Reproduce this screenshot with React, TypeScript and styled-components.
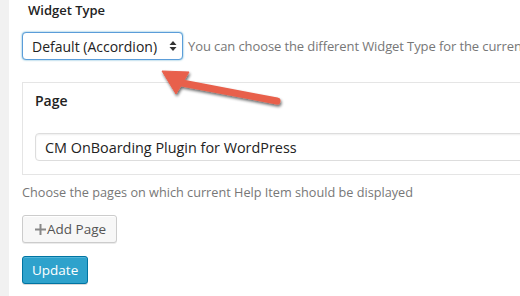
import React from "react";
import styled, { createGlobalStyle } from "styled-components";

const Global = createGlobalStyle`
  html, body { margin: 0; padding: 0; background: #fff; overflow: hidden; }
  body { font-family: "Open Sans", "Liberation Sans", sans-serif; color: #444; }
  * { box-sizing: border-box; }
`;

const Page = styled.div`
  display: flex;
  width: 520px;
  height: 296px;
  position: relative;
  overflow: hidden;
`;

const Sidebar = styled.div`
  width: 9px;
  flex: none;
  background: #f1f1f1;
`;

const Main = styled.div`
  flex: 1;
  padding: 0 0 0 13px;
  display: flex;
  flex-direction: column;
  min-width: 700px;
`;

const Label = styled.div<{ $indent?: number; $size?: number }>`
  font-size: ${(p) => p.$size ?? 14}px;
  font-weight: 600;
  line-height: 20px;
  color: #222;
  padding-left: ${(p) => p.$indent ?? 0}px;
`;

const Row = styled.div`
  display: flex;
  align-items: center;
  gap: 5px;
  margin-top: 12px;
`;

const SelectBox = styled.div`
  width: 161px;
  height: 28px;
  border: 1px solid #5b9dd9;
  border-radius: 4px;
  box-shadow: 0 0 2px rgba(30, 140, 190, 0.8);
  display: flex;
  align-items: center;
  justify-content: space-between;
  padding: 0 5px 0 9px;
  font-size: 14px;
  color: #222;
  background: #fff;
`;

const Desc = styled.span`
  font-size: 13px;
  letter-spacing: -0.1px;
  color: #777;
  white-space: nowrap;
`;

const Box = styled.div`
  margin-top: 22px;
  width: 600px;
  height: 93px;
  border: 1px solid #e5e5e5;
  padding: 8px 0 0 12px;
  display: flex;
  flex-direction: column;
`;

const Input = styled.div`
  margin-top: 22px;
  width: 600px;
  height: 28px;
  border: 1px solid #ddd;
  border-radius: 4px;
  box-shadow: inset 0 1px 2px rgba(0, 0, 0, 0.07);
  display: flex;
  align-items: center;
  padding-left: 9px;
  font-size: 14.4px;
  color: #222;
`;

const Help = styled.div`
  margin-top: 7px;
  font-size: 12.7px;
  line-height: 20px;
  color: #777;
`;

const Button = styled.div<{ $primary?: boolean }>`
  margin-top: 13px;
  align-self: flex-start;
  height: 28px;
  display: inline-flex;
  align-items: center;
  padding: ${(p) => (p.$primary ? "0 9px 0 9px" : "0 10px 0 12px")};
  font-size: 13.5px;
  border-radius: 3px;
  border: 1px solid ${(p) => (p.$primary ? "#0074a2" : "#ccc")};
  background: ${(p) => (p.$primary ? "#2ea2cc" : "#f7f7f7")};
  color: ${(p) => (p.$primary ? "#fff" : "#555")};
  box-shadow: ${(p) =>
    p.$primary
      ? "inset 0 1px 0 rgba(120,200,230,0.5), 0 1px 0 rgba(0,0,0,0.15)"
      : "inset 0 1px 0 #fff, 0 1px 0 rgba(0,0,0,0.08)"};
`;

const Arrow = styled.svg`
  position: absolute;
  left: 0;
  top: 0;
  pointer-events: none;
`;

function UpDown() {
  return (
    <svg width="8" height="12" viewBox="0 0 8 12">
      <path d="M4 1 L7.5 5 H0.5 Z M4 11 L0.5 7 H7.5 Z" fill="#333" />
    </svg>
  );
}

function Plus() {
  return (
    <svg width="11" height="11" viewBox="0 0 11 11" style={{ marginRight: 1 }}>
      <path d="M4.5 0 H6.5 V4.5 H11 V6.5 H6.5 V11 H4.5 V6.5 H0 V4.5 H4.5 Z" fill="#888" />
    </svg>
  );
}

export default function App() {
  return (
    <>
      <Global />
      <Page>
        <Sidebar />
        <Main>
          <Label $indent={6} $size={13}>Widget Type</Label>
          <Row>
            <SelectBox>
              <span>Default (Accordion)</span>
              <UpDown />
            </SelectBox>
            <Desc>You can choose the different Widget Type for the current</Desc>
          </Row>
          <Box>
            <Label>Page</Label>
            <Input>CM OnBoarding Plugin for WordPress</Input>
          </Box>
          <Help>Choose the pages on which current Help Item should be displayed</Help>
          <Button>
            <Plus />
            Add Page
          </Button>
          <Button $primary>Update</Button>
        </Main>
        <Arrow width="520" height="296" viewBox="0 0 520 296">
          <defs>
            <filter id="sh" x="-20%" y="-50%" width="140%" height="200%">
              <feGaussianBlur in="SourceAlpha" stdDeviation="1.5" />
              <feOffset dx="1" dy="2" result="b" />
              <feComponentTransfer>
                <feFuncA type="linear" slope="0.6" />
              </feComponentTransfer>
              <feMerge>
                <feMergeNode />
                <feMergeNode in="SourceGraphic" />
              </feMerge>
            </filter>
          </defs>
          <g filter="url(#sh)" fill="#e8604c" stroke="#e8604c">
            <line x1="182" y1="83" x2="277" y2="101" strokeWidth="7" strokeLinecap="round" />
            <path d="M162 71 L189 72 L176 94 Z" strokeWidth="1" strokeLinejoin="round" />
          </g>
        </Arrow>
      </Page>
    </>
  );
}
